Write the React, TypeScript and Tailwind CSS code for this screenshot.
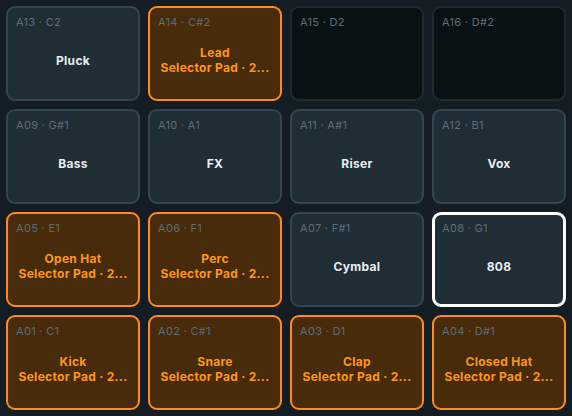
import React from "react";

type Pad = { id: string; note: string; name?: string; sub?: string; state: "normal" | "active" | "empty" | "selected" };

const SUB = "Selector Pad · 2...";

const pads: Pad[] = [
  { id: "A13", note: "C2", name: "Pluck", state: "normal" },
  { id: "A14", note: "C#2", name: "Lead", sub: SUB, state: "active" },
  { id: "A15", note: "D2", state: "empty" },
  { id: "A16", note: "D#2", state: "empty" },
  { id: "A09", note: "G#1", name: "Bass", state: "normal" },
  { id: "A10", note: "A1", name: "FX", state: "normal" },
  { id: "A11", note: "A#1", name: "Riser", state: "normal" },
  { id: "A12", note: "B1", name: "Vox", state: "normal" },
  { id: "A05", note: "E1", name: "Open Hat", sub: SUB, state: "active" },
  { id: "A06", note: "F1", name: "Perc", sub: SUB, state: "active" },
  { id: "A07", note: "F#1", name: "Cymbal", state: "normal" },
  { id: "A08", note: "G1", name: "808", state: "selected" },
  { id: "A01", note: "C1", name: "Kick", sub: SUB, state: "active" },
  { id: "A02", note: "C#1", name: "Snare", sub: SUB, state: "active" },
  { id: "A03", note: "D1", name: "Clap", sub: SUB, state: "active" },
  { id: "A04", note: "D#1", name: "Closed Hat", sub: SUB, state: "active" },
];

function PadCell({ p }: { p: Pad }) {
  const box =
    p.state === "active"
      ? "bg-[#472b0b] border-2 border-[#ff8c1a] p-[8px]"
      : p.state === "empty"
      ? "bg-[#0a1114] border-2 border-[#1c2a32] p-[8px]"
      : p.state === "selected"
      ? "bg-[#1f2d35] border-[3px] border-white p-[7px]"
      : "bg-[#1f2d35] border-2 border-[#334550] p-[8px]";
  const textColor = p.state === "active" ? "text-[#ff9619]" : "text-[#e8edf0]";
  return (
    <div className={`flex flex-col rounded-[9px] ${box} min-w-0`}>
      <div className="text-[11px] leading-[13px] text-[#5d6e78] tracking-[0.3px]">
        {p.id} · {p.note}
      </div>
      <div className={`flex-1 flex flex-col items-center justify-center min-w-0 ${textColor} text-[12px] leading-[15px] font-bold tracking-[0.3px]`}>
        {p.name && <div className="whitespace-nowrap">{p.name}</div>}
        {p.sub && <div className="whitespace-nowrap">{p.sub}</div>}
      </div>
    </div>
  );
}

export default function App() {
  return (
    <div
      className="w-[572px] h-[416px] bg-[#141d23] p-[6px] grid grid-cols-4 grid-rows-4 gap-[8px] overflow-hidden"
      style={{ fontFamily: "Inter, 'Noto Sans', sans-serif" }}
    >
      {pads.map((p) => (
        <PadCell key={p.id} p={p} />
      ))}
    </div>
  );
}
